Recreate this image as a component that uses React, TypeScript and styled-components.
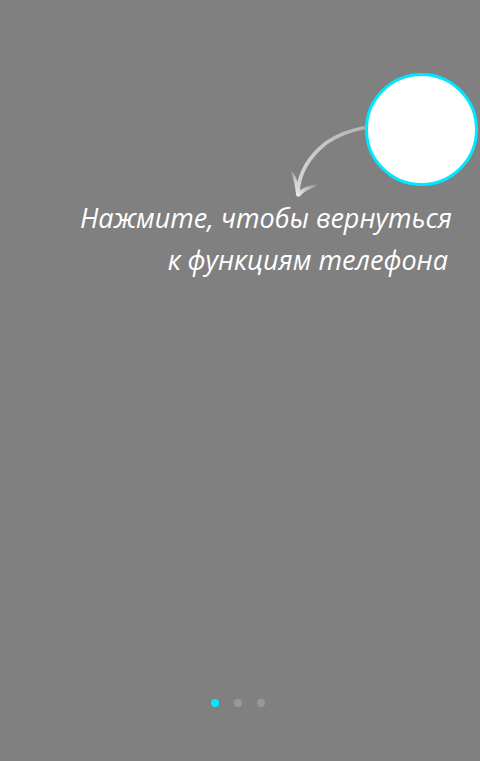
import React, { useState } from "react";
import styled, { createGlobalStyle } from "styled-components";

const GlobalStyle = createGlobalStyle`
  * { box-sizing: border-box; }
  body { margin: 0; background: #808080; }
`;

const Screen = styled.main`
  display: flex;
  flex-direction: column;
  min-height: 100vh;
  background: #808080;
  color: #fff;
`;

const Pointer = styled.div`
  display: flex;
  justify-content: flex-end;
  align-items: flex-start;
  padding: 73px 2px 0 0;
`;

const Arrow = styled.svg`
  flex: none;
  width: 75px;
  height: 124px;
`;

const ReturnButton = styled.button`
  flex: none;
  width: 113px;
  height: 113px;
  padding: 0;
  border: 3px solid #00e8ff;
  border-radius: 50%;
  background: #fff;
  cursor: pointer;
`;

const Hint = styled.p`
  display: flex;
  flex-direction: column;
  align-items: flex-end;
  margin: 0;
  padding-right: 28px;
  font: italic 400 27px/42px "Open Sans", "Noto Sans", sans-serif;
  text-align: right;
`;

const HintLine = styled.span<{ $inset?: boolean }>`
  padding-right: ${({ $inset }) => ($inset ? "4px" : "0")};
`;

const Pager = styled.nav`
  display: flex;
  justify-content: center;
  gap: 15px;
  padding: 0 4px 54px 0;
  margin-top: auto;
`;

const Dot = styled.button<{ $active: boolean }>`
  width: 8px;
  height: 8px;
  padding: 0;
  border: 0;
  border-radius: 50%;
  background: ${({ $active }) => ($active ? "#00e8ff" : "#989898")};
  cursor: pointer;
`;

export default function App() {
  const [page, setPage] = useState(0);

  return (
    <>
      <GlobalStyle />
      <Screen>
        <Pointer>
          <Arrow viewBox="0 0 75 124" fill="none" aria-hidden="true">
            <defs>
              <linearGradient id="shaft" x1="75" y1="54" x2="8" y2="122" gradientUnits="userSpaceOnUse">
                <stop offset="0" stopColor="#b4b4b4" />
                <stop offset="0.5" stopColor="#c8c8c8" />
                <stop offset="1" stopColor="#d8d8d8" />
              </linearGradient>
              <linearGradient id="barbLeft" x1="2" y1="98" x2="8" y2="122" gradientUnits="userSpaceOnUse">
                <stop offset="0" stopColor="#d6d6d6" stopOpacity="0.2" />
                <stop offset="0.4" stopColor="#cccccc" />
                <stop offset="1" stopColor="#e6e6e6" />
              </linearGradient>
              <linearGradient id="barbRight" x1="27" y1="112" x2="8" y2="122" gradientUnits="userSpaceOnUse">
                <stop offset="0" stopColor="#c8c8c8" stopOpacity="0.15" />
                <stop offset="0.5" stopColor="#c0c0c0" />
                <stop offset="1" stopColor="#e6e6e6" />
              </linearGradient>
            </defs>
            <path d="M75 54.5C62 57 46 63 36 70C21 82 9 98 8 119" stroke="url(#shaft)" strokeWidth="3.600" />
            <path d="M1 99Q2 98 3 99C6 104 9 110 10 120Q8 125 6 121C5 112 3.500 106 1 99Z" fill="url(#barbLeft)" />
            <path d="M28 111C28 113 22 115 18 117C14 119 12 121 9.500 123.500Q6 124 6.500 120C12 115 19 112 28 111Z" fill="url(#barbRight)" />
            <circle cx="8" cy="121.500" r="2" fill="#e8e8e8" />
          </Arrow>
          <ReturnButton type="button" aria-label="Вернуться к функциям телефона" />
        </Pointer>
        <Hint>
          <HintLine>Нажмите, чтобы вернуться</HintLine>
          <HintLine $inset>к функциям телефона</HintLine>
        </Hint>
        <Pager aria-label="Страницы">
          {[0, 1, 2].map((index) => (
            <Dot
              key={index}
              type="button"
              $active={index === page}
              aria-label={`Страница ${index + 1}`}
              aria-current={index === page ? "page" : undefined}
              onClick={() => setPage(index)}
            />
          ))}
        </Pager>
      </Screen>
    </>
  );
}
